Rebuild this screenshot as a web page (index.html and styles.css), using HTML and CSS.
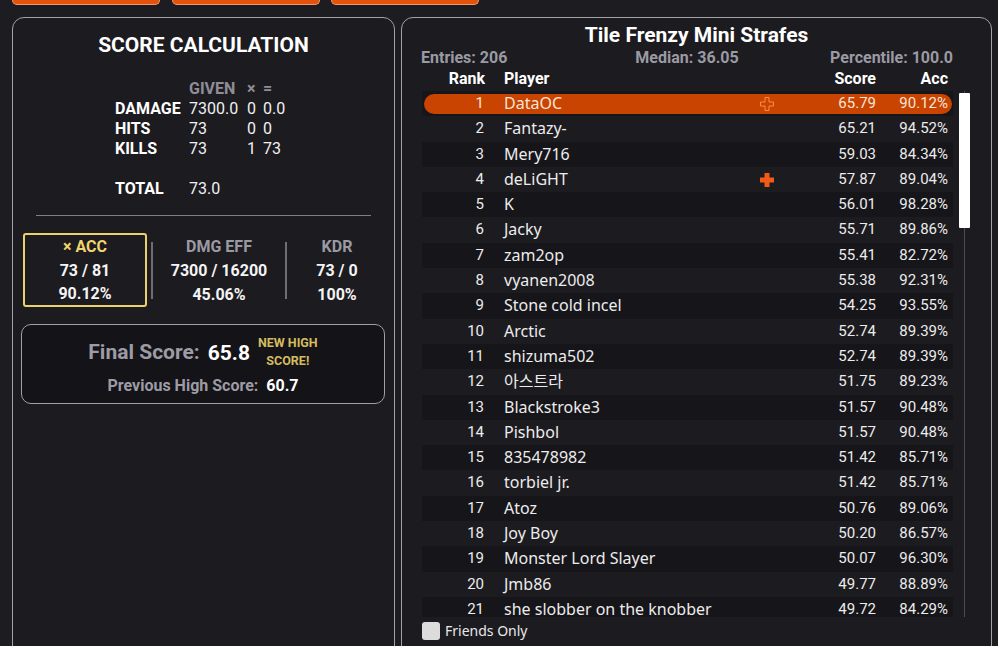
FILE: index.html
```html
<!DOCTYPE html>
<html lang="en">
<head>
<meta charset="utf-8">
<title>Tile Frenzy Mini Strafes</title>
<link rel="stylesheet" href="styles.css">
</head>
<body>
<div class="tabs">
  <div class="tab"></div>
  <div class="tab"></div>
  <div class="tab"></div>
</div>
<div class="main">
  <section class="panel calc">
    <h1 class="calc-title">SCORE CALCULATION</h1>
    <div class="calc-table">
      <span></span><span class="hd">GIVEN</span><span class="hd">×</span><span class="hd">=</span>
      <span class="lbl">DAMAGE</span><span>7300.0</span><span>0</span><span>0.0</span>
      <span class="lbl">HITS</span><span>73</span><span>0</span><span>0</span>
      <span class="lbl">KILLS</span><span>73</span><span>1</span><span>73</span>
      <span class="blank"></span><span class="blank"></span><span class="blank"></span><span class="blank"></span>
      <span class="lbl">TOTAL</span><span>73.0</span><span></span><span></span>
    </div>
    <div class="divider"></div>
    <div class="stats">
      <div class="stat active">
        <div class="stat-name">× ACC</div>
        <div>73 / 81</div>
        <div>90.12%</div>
      </div>
      <div class="sep"></div>
      <div class="stat dmg">
        <div class="stat-name">DMG EFF</div>
        <div>7300 / 16200</div>
        <div>45.06%</div>
      </div>
      <div class="sep"></div>
      <div class="stat kdr">
        <div class="stat-name">KDR</div>
        <div>73 / 0</div>
        <div>100%</div>
      </div>
    </div>
    <div class="final">
      <div class="final-row">
        <span class="final-label">Final Score:</span>
        <span class="final-value">65.8</span>
        <span class="new-high">NEW HIGH<br>SCORE!</span>
      </div>
      <div class="prev-row">
        <span class="prev-label">Previous High Score:</span>
        <span class="prev-value">60.7</span>
      </div>
    </div>
  </section>

  <section class="panel board">
    <h2 class="board-title">Tile Frenzy Mini Strafes</h2>
    <div class="meta">
      <span>Entries: 206</span>
      <span class="mid">Median: 36.05</span>
      <span class="end">Percentile: 100.0</span>
    </div>
    <div class="cols head">
      <span class="rank">Rank</span>
      <span class="name">Player</span>
      <span></span>
      <span class="num">Score</span>
      <span class="num">Acc</span>
    </div>
    <div class="list-wrap">
      <div class="list">
        <div class="cols row me"><span class="rank">1</span><span class="name">DataOC</span><span class="ico"><svg viewBox="0 0 14 14" width="14" height="14"><path d="M5 .5h4v4.5h4.5v4H9v4.5H5V9H.5V5H5z" fill="none" stroke="#ff8a45" stroke-width="1"/></svg></span><span class="num">65.79</span><span class="num">90.12%</span></div>
        <div class="cols row"><span class="rank">2</span><span class="name">Fantazy-</span><span></span><span class="num">65.21</span><span class="num">94.52%</span></div>
        <div class="cols row"><span class="rank">3</span><span class="name">Mery716</span><span></span><span class="num">59.03</span><span class="num">84.34%</span></div>
        <div class="cols row"><span class="rank">4</span><span class="name">deLiGHT</span><span class="ico"><svg viewBox="0 0 14 14" width="14" height="14"><path d="M4.5 0h5v4.5H14v5H9.5V14h-5V9.5H0v-5h4.5z" fill="#f25b17"/></svg></span><span class="num">57.87</span><span class="num">89.04%</span></div>
        <div class="cols row"><span class="rank">5</span><span class="name">K</span><span></span><span class="num">56.01</span><span class="num">98.28%</span></div>
        <div class="cols row"><span class="rank">6</span><span class="name">Jacky</span><span></span><span class="num">55.71</span><span class="num">89.86%</span></div>
        <div class="cols row"><span class="rank">7</span><span class="name">zam2op</span><span></span><span class="num">55.41</span><span class="num">82.72%</span></div>
        <div class="cols row"><span class="rank">8</span><span class="name">vyanen2008</span><span></span><span class="num">55.38</span><span class="num">92.31%</span></div>
        <div class="cols row"><span class="rank">9</span><span class="name">Stone cold incel</span><span></span><span class="num">54.25</span><span class="num">93.55%</span></div>
        <div class="cols row"><span class="rank">10</span><span class="name">Arctic</span><span></span><span class="num">52.74</span><span class="num">89.39%</span></div>
        <div class="cols row"><span class="rank">11</span><span class="name">shizuma502</span><span></span><span class="num">52.74</span><span class="num">89.39%</span></div>
        <div class="cols row"><span class="rank">12</span><span class="name">아스트라</span><span></span><span class="num">51.75</span><span class="num">89.23%</span></div>
        <div class="cols row"><span class="rank">13</span><span class="name">Blackstroke3</span><span></span><span class="num">51.57</span><span class="num">90.48%</span></div>
        <div class="cols row"><span class="rank">14</span><span class="name">Pishbol</span><span></span><span class="num">51.57</span><span class="num">90.48%</span></div>
        <div class="cols row"><span class="rank">15</span><span class="name">835478982</span><span></span><span class="num">51.42</span><span class="num">85.71%</span></div>
        <div class="cols row"><span class="rank">16</span><span class="name">torbiel jr.</span><span></span><span class="num">51.42</span><span class="num">85.71%</span></div>
        <div class="cols row"><span class="rank">17</span><span class="name">Atoz</span><span></span><span class="num">50.76</span><span class="num">89.06%</span></div>
        <div class="cols row"><span class="rank">18</span><span class="name">Joy Boy</span><span></span><span class="num">50.20</span><span class="num">86.57%</span></div>
        <div class="cols row"><span class="rank">19</span><span class="name">Monster Lord Slayer</span><span></span><span class="num">50.07</span><span class="num">96.30%</span></div>
        <div class="cols row"><span class="rank">20</span><span class="name">Jmb86</span><span></span><span class="num">49.77</span><span class="num">88.89%</span></div>
        <div class="cols row"><span class="rank">21</span><span class="name">she slobber on the knobber</span><span></span><span class="num">49.72</span><span class="num">84.29%</span></div>
      </div>
      <div class="scroll"><div class="thumb"></div></div>
    </div>
    <label class="friends"><span class="box"></span><span>Friends Only</span></label>
  </section>
</div>
</body>
</html>
```

FILE: styles.css
```css
* { box-sizing: border-box; }

html, body {
  margin: 0;
  padding: 0;
  height: 100%;
}

body {
  background: #1d1c21;
  color: #f2f2f2;
  font-family: Roboto, "Noto Sans", sans-serif;
  overflow: hidden;
}

/* top tabs */
.tabs {
  display: flex;
  gap: 11.5px;
  padding-left: 12px;
  height: 5px;
}
.tab {
  width: 148px;
  height: 5px;
  background: #e4520b;
  border: 1px solid #f09a6a;
  border-top: none;
  border-radius: 0 0 5px 5px;
}

.main {
  display: flex;
  gap: 6px;
  padding-left: 12px;
  margin-top: 12px;
}

.panel {
  border: 1px solid #a3a2a7;
  border-radius: 12px;
  background: #1c1b20;
  height: 650px;
}

/* ---------- left panel ---------- */
.calc {
  width: 383px;
  padding-top: 15px;
}
.calc-title {
  margin: 0;
  text-align: center;
  font-size: 21px;
  line-height: 24px;
  font-weight: 700;
  color: #ffffff;
}
.calc-table {
  margin: 22px 0 0 102px;
  display: grid;
  grid-template-columns: 74px 58px 16px auto;
  font-size: 16px;
  line-height: 20px;
  color: #f0f0f0;
}
.calc-table .hd {
  color: #8f8e97;
  font-weight: 700;
}
.calc-table .lbl {
  font-weight: 700;
  color: #ffffff;
}
.calc-table .blank { height: 20px; }

.divider {
  margin: 16px 23px 0;
  height: 1px;
  background: #807f85;
}

.stats {
  margin-top: 17px;
  padding: 0 7px 0 10px;
  display: flex;
  align-items: center;
}
.stat {
  text-align: center;
  font-size: 16px;
  font-weight: 700;
  line-height: 24px;
  color: #f4f4f4;
}
.stat.active {
  width: 124px;
  height: 74px;
  border: 2px solid #ebd06e;
  border-radius: 3px;
  line-height: 23.5px;
}
.stat.active .stat-name { color: #efd46f; }
.stat-name { color: #9b9aa2; }
.stat.dmg, .stat.kdr { padding-top: 1px; }
.stat.dmg { width: 132px; }
.stat.kdr { flex: 1; }
.sep {
  width: 2px;
  height: 57px;
  background: #6f6e74;
  margin-left: 4px;
}
.stat.dmg + .sep { margin-left: 0; }

.final {
  margin: 17px 9px 0 8px;
  height: 80px;
  border: 1px solid #a09fa4;
  border-radius: 10px;
  background: #141318;
  padding-top: 9px;
}
.final-row {
  display: flex;
  align-items: center;
  justify-content: center;
  gap: 8px;
}
.final-label {
  font-size: 21px;
  font-weight: 700;
  color: #9d9ca4;
}
.final-value {
  font-size: 21px;
  font-weight: 700;
  color: #ffffff;
  margin-top: 1px;
}
.new-high {
  font-size: 12.5px;
  line-height: 18px;
  font-weight: 700;
  color: #d4bc5f;
  text-align: center;
}
.prev-row {
  margin-top: 6px;
  display: flex;
  justify-content: center;
  gap: 8px;
  font-size: 16px;
  line-height: 20px;
  font-weight: 700;
}
.prev-label { color: #9d9ca4; }
.prev-value { color: #ffffff; }

/* ---------- right panel ---------- */
.board {
  width: 591px;
  padding: 5px 0 0 20px;
}
.board-title {
  margin: 0 0 0 -20px;
  text-align: center;
  font-size: 21px;
  line-height: 24px;
  font-weight: 700;
  color: #ffffff;
}
.meta {
  width: 532px;
  margin: 1px 0 0 -1px;
  display: grid;
  grid-template-columns: 1fr 1fr 1fr;
  font-size: 16px;
  line-height: 20px;
  font-weight: 700;
  color: #9b9aa3;
}
.meta .mid { text-align: center; }
.meta .end { text-align: right; }

.cols {
  display: grid;
  grid-template-columns: 62px 1fr 14px 102px 72px;
  width: 531px;
  padding-right: 5px;
  align-items: center;
}
.cols .name { padding-left: 20px; white-space: nowrap; overflow: hidden; }
.cols .rank, .cols .num { text-align: right; }

.head {
  height: 20px;
  line-height: 20px;
  margin-top: 1px;
  font-size: 16px;
  font-weight: 700;
  color: #ffffff;
}
.head .rank { margin-right: -1px; }

.list-wrap {
  display: flex;
  margin-top: 2px;
}
.list {
  width: 531px;
  height: 526px;
  overflow: hidden;
}
.row {
  position: relative;
  isolation: isolate;
  height: 25.3px;
  line-height: 25.3px;
  font-size: 15px;
  color: #ececec;
}
.row:nth-child(odd) { background: #161519; }
.row .name {
  font-family: "Noto Sans", "Noto Sans CJK KR", sans-serif;
  font-size: 16px;
}
.row .ico {
  display: flex;
  align-items: center;
  justify-content: center;
}
.row.me::before {
  content: "";
  position: absolute;
  left: 2px;
  right: 1px;
  top: 3px;
  bottom: 2px;
  border-radius: 11px;
  background: #c84400;
  z-index: -1;
}
.row.me { color: #f6e4d8; }

.scroll {
  width: 11px;
  margin-left: 6px;
  height: 526px;
  padding-top: 2px;
  background: linear-gradient(#4d4c52, #4d4c52) 5px 0 / 1px 100% no-repeat;
}
.thumb {
  width: 11px;
  height: 135px;
  background: #ffffff;
  border-radius: 1px;
}

.friends {
  display: flex;
  align-items: center;
  gap: 5px;
  margin-top: 4px;
  font-family: "Noto Sans", sans-serif;
  font-size: 14px;
  line-height: 20px;
  color: #e8e8e8;
}
.friends .box {
  width: 18px;
  height: 18px;
  border-radius: 3px;
  background: #dcdcdc;
}
```
